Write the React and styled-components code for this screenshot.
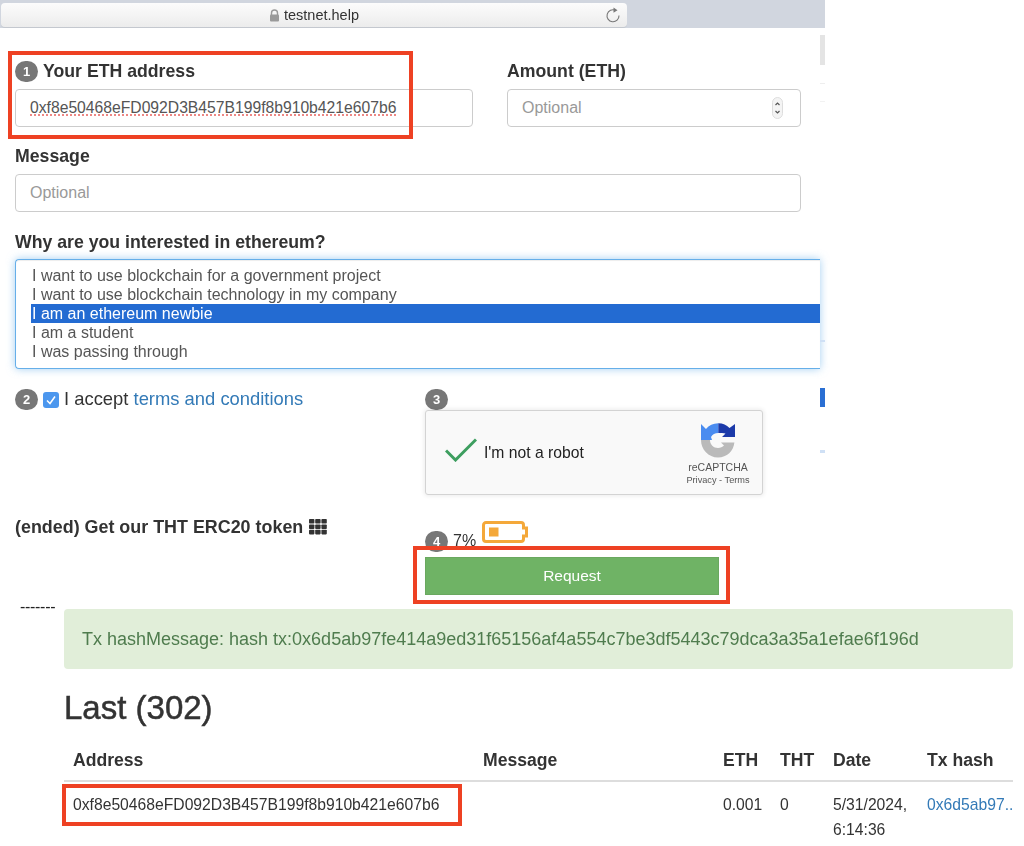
import React from "react"
import styled, { createGlobalStyle } from "styled-components"

const GlobalStyle = createGlobalStyle`
  html, body {
    margin: 0;
    padding: 0;
    background: #fff;
  }
  body {
    font-family: "Liberation Sans", Arial, sans-serif;
    color: #333;
  }
`

const Page = styled.div`
  position: relative;
  width: 1024px;
  height: 846px;
  overflow: hidden;
`

// the screenshot is a soft, upscaled capture
const Capture = styled.div`
  filter: blur(0.3px);
`

// browser chrome
const BrowserBar = styled.div`
  width: 825px;
  height: 28px;
  box-sizing: border-box;
  padding: 3px 0 0 1px;
  background: #d1d6df;
`

const AddressField = styled.div`
  position: relative;
  width: 626px;
  height: 24px;
  display: flex;
  align-items: center;
  justify-content: center;
  gap: 4px;
  box-sizing: border-box;
  background: linear-gradient(#fcfcfc, #ececec);
  border-radius: 4px;
  box-shadow: 0 1px 0 #c4c8cf;
  font-size: 14.5px;
  color: #333;
`

const Reload = styled.svg`
  position: absolute;
  right: 6px;
  top: 4px;
`

const Form = styled.div`
  width: 820px;
  box-sizing: border-box;
  padding: 30px 0 0 15px;
`

const FieldRow = styled.div`
  display: grid;
  grid-template-columns: 458px 294px;
  column-gap: 34px;
`

const Field = styled.div`
  margin-top: ${p => p.$top || 0}px;
  width: ${p => p.$width || "auto"};
`

const FieldLabel = styled.div`
  display: flex;
  align-items: center;
  gap: 5px;
  height: 26px;
  margin-bottom: ${p => p.$gap || 5}px;
  font-size: 17.7px;
  font-weight: 700;
  color: #333;
`

const Badge = styled.span`
  flex: none;
  display: inline-flex;
  align-items: center;
  justify-content: center;
  width: 23px;
  height: 21px;
  border-radius: 11px;
  background: #777;
  color: #fff;
  font-size: 13px;
  font-weight: 700;
`

const Input = styled.div`
  position: relative;
  display: flex;
  align-items: center;
  height: 38px;
  box-sizing: border-box;
  padding: 0 14px;
  background: #fff;
  border: 1px solid #ccc;
  border-radius: 4px;
  font-size: ${p => (p.$placeholder ? 16 : 15.7)}px;
  color: ${p => (p.$placeholder ? "#999" : "#555")};
`

const Misspelled = styled.span`
  text-decoration: underline dotted #e8605c;
  text-underline-offset: 2px;
`

const Stepper = styled.svg`
  position: absolute;
  right: 17px;
  top: 7px;
`

const ListBox = styled.div`
  height: 110px;
  width: 805px;
  box-sizing: border-box;
  padding: 6px 0 0 15px;
  border: 1px solid #66afe9;
  border-right: none;
  border-radius: 4px 0 0 4px;
  box-shadow: inset 0 1px 1px rgba(0, 0, 0, 0.075), 0 0 8px rgba(102, 175, 233, 0.6);
`

const ListOption = styled.div`
  height: 19px;
  line-height: 19px;
  padding-left: 1px;
  font-size: 16px;
  color: ${p => (p.$selected ? "#fff" : "#555")};
  background: ${p => (p.$selected ? "#236bd2" : "transparent")};
`

const Lower = styled.div`
  display: grid;
  grid-template-columns: 410px 294px;
  margin-top: 20px;
`

const LeftColumn = styled.div`
  display: flex;
  flex-direction: column;
  justify-content: space-between;
  height: 151px;
`

const AcceptRow = styled.div`
  display: flex;
  align-items: center;
  height: 21px;
  gap: 5px;
  font-size: 18.4px;
  color: #333;
`

const AcceptText = styled.span`
  margin-bottom: 2px;
`

const Checkbox = styled.span`
  flex: none;
  display: inline-flex;
  align-items: center;
  justify-content: center;
  width: 16px;
  height: 16px;
  border-radius: 3px;
  background: #4c97ee;
`

const Link = styled.a`
  color: #337ab7;
  text-decoration: none;
`

const TokenLine = styled.div`
  display: flex;
  align-items: center;
  gap: 6px;
  height: 26px;
  font-size: 17.9px;
  font-weight: 700;
  color: #333;
`

const RightColumn = styled.div`
  display: flex;
  flex-direction: column;
  align-items: flex-start;
`

const Captcha = styled.div`
  width: 338px;
  height: 85px;
  box-sizing: border-box;
  display: flex;
  align-items: center;
  padding: 0 12px 0 19px;
  background: #f9f9f9;
  border: 1px solid #d3d3d3;
  border-radius: 3px;
  box-shadow: 0 0 4px 1px rgba(0, 0, 0, 0.08);
`

const CheckMark = styled.svg`
  flex: none;
  margin-bottom: 6px;
`

const CaptchaLabel = styled.span`
  flex: 1;
  margin-left: 7px;
  font-size: 15.7px;
  color: #222;
`

const CaptchaBrand = styled.div`
  display: flex;
  flex-direction: column;
  align-items: center;
  width: 64px;
  padding-top: 4px;
  color: #555;
`

const BrandName = styled.span`
  margin-top: 3px;
  font-size: 10.5px;
  line-height: 13px;
`

const BrandLinks = styled.span`
  font-size: 9.2px;
  line-height: 12px;
`

const QuotaRow = styled.div`
  display: flex;
  align-items: flex-start;
  width: 294px;
  height: 36px;
  margin-top: 26px;
  font-size: 16px;
  color: #333;
`

const QuotaBadge = styled(Badge)`
  margin-top: 10px;
  margin-right: 5px;
`

const QuotaText = styled.span`
  margin-top: 10px;
  line-height: 19px;
`

const Battery = styled.svg`
  margin-left: 6px;
`

const RequestButton = styled.button`
  width: 294px;
  height: 38px;
  padding: 0;
  border: 1px solid #6aa85f;
  border-radius: 0;
  background: #6fb365;
  color: #fff;
  font-family: inherit;
  font-size: 15.5px;
`

const Results = styled.div`
  display: grid;
  grid-template-columns: 64px 949px;
  margin-top: 5px;
`

const Dashes = styled.div`
  padding-left: 20px;
  height: 14px;
  line-height: 14px;
  font-size: 16px;
  color: #222;
  letter-spacing: -0.3px;
`

const ResultsBody = styled.div`
  padding-top: 9px;
`

const Alert = styled.div`
  height: 60px;
  box-sizing: border-box;
  display: flex;
  align-items: center;
  padding: 0 18px;
  background: #e1eed9;
  border-radius: 4px;
  font-size: 18px;
  color: #4f7c4e;
  white-space: nowrap;
`

const Heading = styled.h2`
  margin: 20px 0 0;
  height: 38px;
  line-height: 38px;
  font-size: 33px;
  font-weight: 400;
  -webkit-text-stroke: 0.5px #333;
  color: #333;
`

const Table = styled.table`
  width: 949px;
  margin-top: 13px;
  table-layout: fixed;
  border-collapse: collapse;
`

const Th = styled.th`
  height: 41px;
  box-sizing: border-box;
  padding: 0 9px;
  text-align: left;
  vertical-align: middle;
  font-size: 17.6px;
  font-weight: 700;
  border-bottom: 2px solid #ddd;
  width: ${p => p.$width}px;
`

const Td = styled.td`
  padding: 10px 9px 0;
  vertical-align: top;
  line-height: 25px;
  font-size: 15.7px;
  white-space: ${p => (p.$wrap ? "normal" : "nowrap")};
  overflow: hidden;
`

const Callout = styled.div`
  position: absolute;
  left: ${p => p.$x}px;
  top: ${p => p.$y}px;
  width: ${p => p.$w}px;
  height: ${p => p.$h}px;
  box-sizing: border-box;
  border: 4px solid #ee4123;
  pointer-events: none;
`

// what is left of the page's scrollbar and column behind the crop edge
const Sliver = styled.div`
  position: absolute;
  left: 820px;
  top: ${p => p.$y}px;
  width: 5px;
  height: ${p => p.$h}px;
  background: ${p => p.$color};
`

const Lock = () => (
  <svg width="11" height="13" viewBox="0 0 11 13">
    <path d="M2.5 6V4a3 3 0 0 1 6 0v2" fill="none" stroke="#9a9a9a" strokeWidth="1.4" />
    <rect x="1" y="5.5" width="9" height="7" rx="1" fill="#9a9a9a" />
  </svg>
)

const RecaptchaLogo = () => (
  <svg width="34" height="35" viewBox="0 0 34 35">
    <path d="M17.300 .3C12 .3 8 2.500 5 6L0 1V17H11L10 14C11.500 11.500 14 10 17.300 10z" fill="#4a8cf0" />
    <path d="M17.300 .3C22 .3 25.500 2 28.500 5L34 1V14H21L24.500 10.500C22.500 10.300 20 10 17.300 10z" fill="#1c3aa9" />
    <path d="M0 17H9C9 21.500 12.500 25 17 25C19.500 25 21.500 24 23 22.500L20 19.500H33.400C32.500 28 26 34.500 17 34.500C7.500 34.500 0 26.500 0 17z" fill="#bababa" />
  </svg>
)

const GridIcon = () => (
  <svg width="18" height="16" viewBox="0 0 18 16" fill="#333">
    {[0, 6.2, 12.4].map(x =>
      [0, 5.4, 10.8].map(y => <rect key={`${x}-${y}`} x={x} y={y} width="5.4" height="4.6" rx="0.8" />)
    )}
  </svg>
)

const options = [
  "I want to use blockchain for a government project",
  "I want to use blockchain technology in my company",
  "I am an ethereum newbie",
  "I am a student",
  "I was passing through",
]

const ADDRESS = "0xf8e50468eFD092D3B457B199f8b910b421e607b6"

export default function App() {
  return (
    <Page>
      <GlobalStyle />
      <Capture>
        <BrowserBar>
          <AddressField>
            <Lock />
            testnet.help
            <Reload width="16" height="16" viewBox="0 0 16 16" fill="none">
              <path d="M10.500 3.300A6 6 0 1 0 14 8.500" stroke="#777" strokeWidth="1.100" />
              <path d="M8.500 0.500l4 2.800-4 2.400z" fill="#777" />
            </Reload>
          </AddressField>
        </BrowserBar>

        <Form>
          <FieldRow>
            <Field>
              <FieldLabel>
                <Badge>1</Badge>
                Your ETH address
              </FieldLabel>
              <Input>
                <Misspelled>{ADDRESS}</Misspelled>
              </Input>
            </Field>
            <Field>
              <FieldLabel>Amount (ETH)</FieldLabel>
              <Input $placeholder>
                Optional
                <Stepper width="11" height="22" viewBox="0 0 11 22" fill="none">
                  <rect x="0.500" y="0.500" width="10" height="21" rx="5" fill="#f4f4f4" stroke="#ddd" />
                  <path d="M3.500 8l2-2 2 2M3.500 14l2 2 2-2" stroke="#555" strokeWidth="1.200" />
                </Stepper>
              </Input>
            </Field>
          </FieldRow>

          <Field $top={16} $width="786px">
            <FieldLabel>Message</FieldLabel>
            <Input $placeholder>Optional</Input>
          </Field>

          <Field $top={17}>
            <FieldLabel $gap={4}>Why are you interested in ethereum?</FieldLabel>
            <ListBox>
              {options.map((option, i) => (
                <ListOption key={option} $selected={i === 2}>
                  {option}
                </ListOption>
              ))}
            </ListBox>
          </Field>

          <Lower>
            <LeftColumn>
              <AcceptRow>
                <Badge>2</Badge>
                <Checkbox>
                  <svg width="12" height="12" viewBox="0 0 12 12" fill="none">
                    <path d="M2 6.500l3 3 5-7" stroke="#fff" strokeWidth="1.500" />
                  </svg>
                </Checkbox>
                <AcceptText>
                  I accept <Link>terms and conditions</Link>
                </AcceptText>
              </AcceptRow>
              <TokenLine>
                (ended) Get our THT ERC20 token
                <GridIcon />
              </TokenLine>
            </LeftColumn>

            <RightColumn>
              <Badge>3</Badge>
              <Captcha>
                <CheckMark width="32" height="24" viewBox="0 0 32 24" fill="none">
                  <path d="M1 12.500l9.500 9.500L31 1.500" stroke="#3d9e5f" strokeWidth="3" />
                </CheckMark>
                <CaptchaLabel>I'm not a robot</CaptchaLabel>
                <CaptchaBrand>
                  <RecaptchaLogo />
                  <BrandName>reCAPTCHA</BrandName>
                  <BrandLinks>Privacy - Terms</BrandLinks>
                </CaptchaBrand>
              </Captcha>
              <QuotaRow>
                <QuotaBadge>4</QuotaBadge>
                <QuotaText>7%</QuotaText>
                <Battery width="46" height="22" viewBox="0 0 46 22">
                  <path
                    d="M4 1.500h35a2.500 2.500 0 0 1 2.500 2.500v3H44.500v8h-3v3a2.500 2.500 0 0 1-2.500 2.500H4A2.500 2.500 0 0 1 1.500 18V4A2.500 2.500 0 0 1 4 1.500z"
                    fill="#fff"
                    stroke="#f4a83a"
                    strokeWidth="3"
                  />
                  <rect x="7" y="6.500" width="9.500" height="9" fill="#f4a83a" />
                </Battery>
              </QuotaRow>
              <RequestButton>Request</RequestButton>
            </RightColumn>
          </Lower>
        </Form>

        <Results>
          <Dashes>-------</Dashes>
          <ResultsBody>
            <Alert>Tx hashMessage: hash tx:0x6d5ab97fe414a9ed31f65156af4a554c7be3df5443c79dca3a35a1efae6f196d</Alert>
            <Heading>Last (302)</Heading>
            <Table>
              <thead>
                <tr>
                  <Th $width={410}>Address</Th>
                  <Th $width={240}>Message</Th>
                  <Th $width={57}>ETH</Th>
                  <Th $width={53}>THT</Th>
                  <Th $width={94}>Date</Th>
                  <Th $width={95}>Tx hash</Th>
                </tr>
              </thead>
              <tbody>
                <tr>
                  <Td>{ADDRESS}</Td>
                  <Td />
                  <Td>0.001</Td>
                  <Td>0</Td>
                  <Td $wrap>5/31/2024, 6:14:36</Td>
                  <Td>
                    <Link>0x6d5ab97..</Link>
                  </Td>
                </tr>
              </tbody>
            </Table>
          </ResultsBody>
        </Results>

        <Sliver $y={35} $h={30} $color="#e4e4e4" />
        <Sliver $y={83} $h={1} $color="#eeeeee" />
        <Sliver $y={101} $h={1} $color="#f2f2f2" />
        <Sliver $y={340} $h={2} $color="#cfe0f5" />
        <Sliver $y={388} $h={19} $color="#2a6fd3" />
        <Sliver $y={450} $h={3} $color="#cfe0f5" />
      </Capture>

      <Callout $x={8} $y={51} $w={405} $h={88} />
      <Callout $x={413} $y={546} $w={317} $h={58} />
      <Callout $x={62} $y={784} $w={400} $h={42} />
    </Page>
  )
}
